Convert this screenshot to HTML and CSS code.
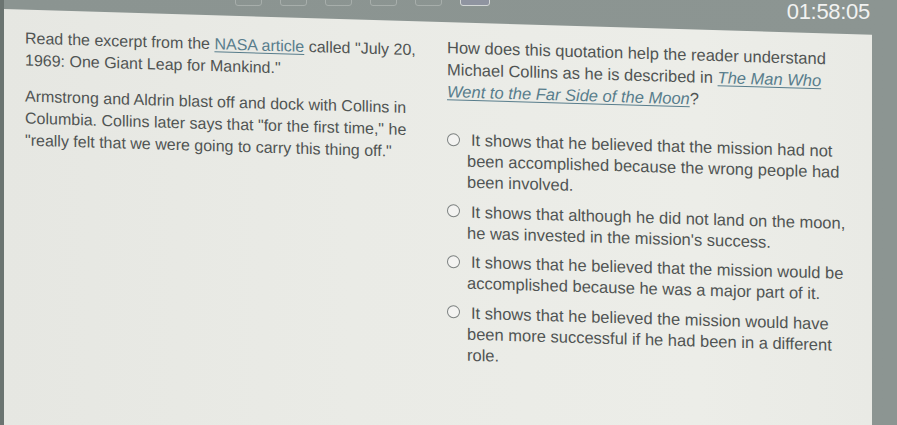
FILE: index.html
```html
<!DOCTYPE html>
<html lang="en">
<head>
<meta charset="utf-8">
<title>Question</title>
<link rel="stylesheet" href="styles.css">
</head>
<body>
<div class="screen">
  <header class="topbar">
    <nav class="qnav">
      <span class="qbox"></span>
      <span class="qbox"></span>
      <span class="qbox"></span>
      <span class="qbox"></span>
      <span class="qbox"></span>
      <span class="qbox current"></span>
    </nav>
    <div class="timer">01:58:05</div>
  </header>
  <main class="panel">
    <section class="passage">
      <p>Read the excerpt from the <a class="link" href="#">NASA article</a> called "July 20, 1969: One Giant Leap for Mankind."</p>
      <p>Armstrong and Aldrin blast off and dock with Collins in Columbia. Collins later says that "for the first time," he "really felt that we were going to carry this thing off."</p>
    </section>
    <section class="question">
      <p class="prompt">How does this quotation help the reader understand Michael Collins as he is described in <a class="link title" href="#">The Man Who Went to the Far Side of the Moon</a>?</p>
      <ul class="options">
        <li class="option"><span class="radio"></span><span class="label">It shows that he believed that the mission had not been accomplished because the wrong people had been involved.</span></li>
        <li class="option"><span class="radio"></span><span class="label">It shows that although he did not land on the moon, he was invested in the mission's success.</span></li>
        <li class="option"><span class="radio"></span><span class="label">It shows that he believed that the mission would be accomplished because he was a major part of it.</span></li>
        <li class="option"><span class="radio"></span><span class="label">It shows that he believed the mission would have been more successful if he had been in a different role.</span></li>
      </ul>
    </section>
  </main>
</div>
</body>
</html>
```
FILE: styles.css
```css
html, body {
  margin: 0;
  padding: 0;
  height: 100%;
  overflow: hidden;
}
body {
  background: linear-gradient(to right, #6b7471 0, #6b7471 4px, #8b9491 4px, #8c9592 100%);
  font-family: "Liberation Sans", Arial, sans-serif;
  color: #505453;
}
.screen {
  width: 897px;
  height: 425px;
  overflow: hidden;
}
.topbar {
  height: 9px;
  display: flex;
  align-items: flex-start;
  justify-content: space-between;
  padding: 0 27px 0 235px;
}
.qnav {
  display: flex;
  gap: 18px;
  margin-top: -14px;
}
.qbox {
  display: block;
  width: 25px;
  height: 18px;
  border: 1px solid #a7aeab;
  border-radius: 3px;
}
.qbox.current {
  width: 28px;
  border-color: #d3d7d6;
  background: #8f94a0;
}
.timer {
  font-size: 22px;
  line-height: 22px;
  color: #f1f2f1;
  margin-top: 1px;
  letter-spacing: -0.3px;
  position: relative;
  z-index: 2;
}
.panel {
  margin-left: 4px;
  width: 868px;
  height: 440px;
  background: linear-gradient(to right, #e6e7e2 0%, #eaebe6 40%, #ecede8 80%, #e9eae5 100%);
  transform: skewY(1.7deg);
  transform-origin: 0 0;
  display: grid;
  grid-template-columns: 410px 410px;
  column-gap: 12px;
  padding-left: 21px;
  box-sizing: border-box;
  font-size: 16px;
}
.passage {
  padding-top: 18px;
}
.passage p {
  margin: 0 0 14px;
  line-height: 22px;
}
.link {
  color: #587d8c;
  text-decoration: underline;
  text-underline-offset: 2px;
}
.link.title {
  font-style: italic;
}
.question {
  padding-top: 14px;
  font-size: 16.5px;
}
.prompt {
  margin: 0 0 27px;
  width: 400px;
  line-height: 22px;
}
.options {
  list-style: none;
  margin: 0;
  padding: 0;
  display: flex;
  flex-direction: column;
  gap: 8.5px;
}
.option {
  display: flex;
  align-items: flex-start;
  gap: 7px;
}
.radio {
  flex: none;
  width: 11px;
  height: 11px;
  border: 1.5px solid #7d8281;
  border-radius: 50%;
  background: #f3f3f1;
  margin-top: 3.5px;
}
.label {
  width: 397px;
  line-height: 21px;
  text-indent: 4px;
}
```
